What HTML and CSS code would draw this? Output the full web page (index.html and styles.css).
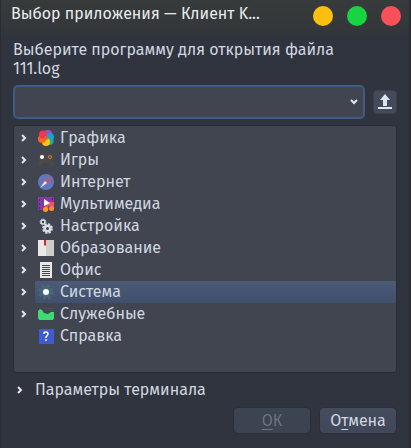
FILE: index.html
```html
<!DOCTYPE html>
<html lang="ru">
<head>
    <meta charset="UTF-8">
    <meta name="viewport" content="width=device-width, initial-scale=1.0">
    <title>Выбор приложения</title>
    <link rel="stylesheet" href="styles.css">
</head>
<body>
    <svg class="sprite" aria-hidden="true">
        <symbol id="chevron" viewBox="0 0 8 8">
            <path d="M2 1l3 3-3 3" fill="none" stroke="currentColor" stroke-width="2"/>
        </symbol>
    </svg>
    <div class="dialog">
        <header class="titlebar">
            <h1>Выбор приложения — Клиент K...</h1>
            <div class="window-buttons">
                <button type="button" class="minimize" aria-label="Свернуть"></button>
                <button type="button" class="maximize" aria-label="Развернуть"></button>
                <button type="button" class="close" aria-label="Закрыть"></button>
            </div>
        </header>
        <form class="content">
            <label class="prompt" for="program">Выберите программу для открытия файла 111.log</label>
            <div class="program-row">
                <div class="combo">
                    <input type="text" id="program" name="program" autocomplete="off">
                    <button type="button" class="combo-arrow" aria-label="Показать список">
                        <svg width="8" height="8" viewBox="0 0 8 8"><path d="M1 2l3 3 3-3" fill="none" stroke="#e4e7ec" stroke-width="2"/></svg>
                    </button>
                </div>
                <button type="button" class="browse" aria-label="Обзор">
                    <svg width="16" height="18" viewBox="0 0 16 18"><path d="M8 1l5 6h-3v6H6V7H3zM1 14h14v2H1z" fill="#dce6f2"/></svg>
                </button>
            </div>

            <ul class="tree">
                <li>
                    <button type="button" class="expander" aria-label="Раскрыть"><svg><use href="#chevron"/></svg></button>
                    <a href="#graphics" class="item">
                        <svg viewBox="0 0 16 16">
                            <circle cx="10" cy="4" r="4" fill="#8e55c9"/>
                            <circle cx="12" cy="7" r="4" fill="#1e9be0"/>
                            <circle cx="11.5" cy="11" r="4" fill="#16b39c"/>
                            <circle cx="8" cy="12" r="4" fill="#f9c80e"/>
                            <circle cx="4" cy="9" r="4" fill="#f8691c"/>
                            <circle cx="5" cy="4.500" r="4" fill="#f5364e"/>
                            <circle cx="8" cy="8" r="2" fill="#d9673c"/>
                        </svg>
                        Графика
                    </a>
                </li>
                <li>
                    <button type="button" class="expander" aria-label="Раскрыть"><svg><use href="#chevron"/></svg></button>
                    <a href="#games" class="item">
                        <svg viewBox="0 0 16 16">
                            <path d="M1 2h5l1 1h2l1-1h5l1 12-2 1-3-4H5l-3 4-2-1z" fill="#4c4a48"/>
                            <circle cx="4" cy="5" r="2" fill="#fff"/>
                            <circle cx="12" cy="5" r="1.5" fill="none" stroke="#c87a43"/>
                        </svg>
                        Игры
                    </a>
                </li>
                <li>
                    <button type="button" class="expander" aria-label="Раскрыть"><svg><use href="#chevron"/></svg></button>
                    <a href="#internet" class="item">
                        <svg viewBox="0 0 16 16">
                            <circle cx="8" cy="8" r="8" fill="#6674ba"/>
                            <path d="M14 2L7 7l2 2z" fill="#ed4b4b"/>
                            <path d="M2 14l5-7 2 2z" fill="#f1f2fa"/>
                        </svg>
                        Интернет
                    </a>
                </li>
                <li>
                    <button type="button" class="expander" aria-label="Раскрыть"><svg><use href="#chevron"/></svg></button>
                    <a href="#multimedia" class="item">
                        <svg viewBox="0 0 16 16">
                            <path d="M0 1h16v13H0z" fill="#8439a5"/>
                            <path d="M1 3h1v2H1zM1 7h1v2H1zM1 11h1v2H1zM14 2h1v2h-1z" fill="#4f2677"/>
                            <path d="M7 6h9v8h-3v-4h-3v5H7z" fill="#f4515c"/>
                            <path d="M6 3l6 4-6 3z" fill="#fff"/>
                            <circle cx="7.5" cy="13.5" r="2.5" fill="#ff9d17"/>
                            <circle cx="13.5" cy="12.5" r="2.5" fill="#ff8d27"/>
                        </svg>
                        Мультимедиа
                    </a>
                </li>
                <li>
                    <button type="button" class="expander" aria-label="Раскрыть"><svg><use href="#chevron"/></svg></button>
                    <a href="#settings" class="item">
                        <svg viewBox="0 0 16 16" fill="none" stroke="#d5dfe7">
                            <circle cx="5" cy="4" r="2" stroke-width="1.5"/>
                            <circle cx="5" cy="4" r="3" stroke-width="1" stroke-dasharray="1.2 1.15"/>
                            <circle cx="9.5" cy="10.5" r="2.8" stroke-width="2.6"/>
                            <circle cx="9.5" cy="10.5" r="4.6" stroke-width="1.6" stroke-dasharray="2.2 1.41"/>
                        </svg>
                        Настройка
                    </a>
                </li>
                <li>
                    <button type="button" class="expander" aria-label="Раскрыть"><svg><use href="#chevron"/></svg></button>
                    <a href="#education" class="item">
                        <svg viewBox="0 0 16 16">
                            <path d="M0 0h8v16H0z" fill="#e9e8e6"/>
                            <path d="M8 0h8v16H8z" fill="#cfcdcb"/>
                            <path d="M6 0h2v6L7 5 6 6z" fill="#c9302c"/>
                        </svg>
                        Образование
                    </a>
                </li>
                <li>
                    <button type="button" class="expander" aria-label="Раскрыть"><svg><use href="#chevron"/></svg></button>
                    <a href="#office" class="item">
                        <svg viewBox="0 0 16 16">
                            <path d="M2 0h12v16H2z" fill="#e9e9e7"/>
                            <path d="M4 3h8v1H4zM4 5h8v1H4zM4 7h8v1H4zM4 9h8v1H4zM4 11h8v1H4zM4 13h8v1H4z" fill="#44474b"/>
                        </svg>
                        Офис
                    </a>
                </li>
                <li>
                    <button type="button" class="expander" aria-label="Раскрыть"><svg><use href="#chevron"/></svg></button>
                    <a href="#system" class="item selected" aria-current="true">
                        <svg viewBox="0 0 16 16">
                            <circle cx="8" cy="8" r="5.5" fill="#4a6775"/>
                            <circle cx="8" cy="8" r="6.5" fill="none" stroke="#4a6775" stroke-width="2.5" stroke-dasharray="3 2.105"/>
                            <circle cx="8" cy="8" r="3" fill="#fff"/>
                        </svg>
                        Система
                    </a>
                </li>
                <li>
                    <button type="button" class="expander" aria-label="Раскрыть"><svg><use href="#chevron"/></svg></button>
                    <a href="#utilities" class="item">
                        <svg viewBox="0 0 16 16">
                            <path d="M5 2h11v1H5zM7 4h9v1H7z" fill="#4c5052"/>
                            <path d="M0 5l2-2 2 1 2 3 4 1 3-2h3v6a2 2 0 0 1-2 2H2a2 2 0 0 1-2-2z" fill="#3fda72"/>
                        </svg>
                        Служебные
                    </a>
                </li>
                <li>
                    <a href="#help" class="item leaf">
                        <svg viewBox="0 0 16 16">
                            <path d="M1 1h15v15H1z" fill="#3f5bd0"/>
                            <path d="M6 6V5q0-1 2-1t2 2q0 1-2 3v1M8 11v2" fill="none" stroke="#fff" stroke-width="1.4"/>
                        </svg>
                        Справка
                    </a>
                </li>
            </ul>

            <details class="terminal">
                <summary><svg><use href="#chevron"/></svg>Параметры терминала</summary>
            </details>

            <div class="actions">
                <button type="submit" disabled><u>О</u>К</button>
                <button type="button">О<u>т</u>мена</button>
            </div>
        </form>
    </div>
</body>
</html>
```
FILE: styles.css
```css
* {
    box-sizing: border-box;
}
body {
    margin: 0;
    background-color: #30343e;
    color: #d0d7e0;
    font-family: "Fira Sans", "Noto Sans", sans-serif;
    font-size: 16px;
    line-height: 20px;
}
button, input {
    font: inherit;
    color: inherit;
    padding: 0;
    margin: 0;
}
.sprite {
    display: none;
}
.dialog {
    min-height: 100vh;
    border: 1px solid #292c33;
    border-width: 0 2px 1px 1px;
    background: linear-gradient(#373b3c, #333739 30px, #30343e 36px);
}

/* title bar */
.titlebar {
    display: flex;
    align-items: center;
    justify-content: space-between;
    height: 32px;
    padding: 0 8px 0 10px;
}
h1 {
    margin: 0 0 4px;
    font-size: 16px;
    font-weight: normal;
    color: #e8ebee;
    white-space: nowrap;
}
.window-buttons {
    display: flex;
    gap: 14px;
}
.window-buttons button {
    width: 20px;
    height: 20px;
    border: none;
    border-radius: 50%;
}
.minimize {
    background-color: #fdbf0f;
}
.maximize {
    background-color: #17d440;
}
.close {
    background-color: #f9505a;
}

/* program chooser */
.content {
    padding: 8px 12px 14px;
}
.prompt {
    display: block;
    padding-right: 32px;
    line-height: 19px;
}
.program-row {
    display: flex;
    align-items: center;
    gap: 8px;
    margin: 7px 0 6px;
}
.combo {
    position: relative;
    flex: 1;
}
.combo input {
    display: block;
    width: 100%;
    height: 34px;
    padding: 0 24px 0 8px;
    background-color: #40454f;
    border: 2px solid #405b86;
    border-radius: 5px;
    outline: none;
}
.combo-arrow {
    position: absolute;
    top: 2px;
    right: 2px;
    bottom: 2px;
    width: 18px;
    background: none;
    border: none;
}
.combo-arrow svg {
    display: block;
    margin: 0 auto;
}
.browse {
    display: flex;
    align-items: center;
    justify-content: center;
    width: 24px;
    height: 24px;
    background-color: #444a5a;
    border: 1px solid #3b404b;
    border-radius: 4px;
}

/* category tree */
.tree {
    height: 248px;
    margin: 0;
    padding: 1px 0;
    list-style: none;
    background-color: #404550;
    border: 1px solid #292c35;
    border-radius: 3px;
}
.tree li {
    display: flex;
    height: 22px;
}
.expander {
    width: 21px;
    background: none;
    border: none;
}
.expander svg, .terminal svg {
    display: block;
    width: 8px;
    height: 8px;
    color: #e4e7ec;
}
.expander svg {
    margin-left: 6px;
}
.item {
    display: flex;
    flex: 1;
    align-items: center;
    gap: 6px;
    padding-left: 3px;
    color: inherit;
    text-decoration: none;
}
.item svg {
    width: 16px;
    height: 16px;
}
.leaf {
    margin-left: 21px;
}
.selected {
    background: linear-gradient(#4b5b77, #40506c);
}

/* bottom part */
.terminal {
    margin-top: 7px;
}
.terminal summary {
    display: flex;
    align-items: center;
    gap: 11px;
    padding-left: 3px;
    list-style: none;
}
.actions {
    display: flex;
    justify-content: flex-end;
    gap: 8px;
    margin-top: 7px;
}
.actions button {
    width: 78px;
    height: 27px;
    background: linear-gradient(#454c5c, #40475a);
    border: 1px solid #2b2f39;
    border-radius: 5px;
}
.actions button:disabled {
    background: #3c4351;
    color: #6c727e;
}
.actions u {
    text-underline-offset: 3px;
}
```
